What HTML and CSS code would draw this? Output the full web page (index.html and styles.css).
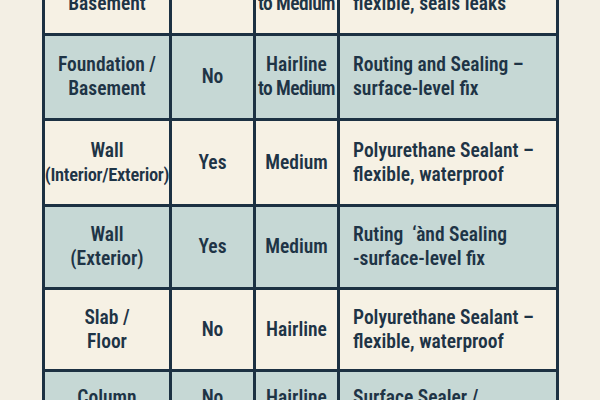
FILE: index.html
```html
<!DOCTYPE html>
<html>
<head>
<meta charset="utf-8">
<link rel="stylesheet" href="styles.css">
</head>
<body>
<div class="table">
  <div class="cell cream"><div>Foundation /<br>Basement</div></div>
  <div class="cell cream"><div>Yes</div></div>
  <div class="cell cream"><div>Hairline<br><span class="tight">to Medium</span></div></div>
  <div class="cell cream desc"><div>Polyurethane Injection –<br>flexible, seals leaks</div></div>

  <div class="cell blue"><div>Foundation /<br>Basement</div></div>
  <div class="cell blue"><div>No</div></div>
  <div class="cell blue"><div>Hairline<br><span class="tight">to Medium</span></div></div>
  <div class="cell blue desc"><div>Routing and Sealing –<br>surface-level fix</div></div>

  <div class="cell cream"><div>Wall<br><span class="small">(Interior/Exterior)</span></div></div>
  <div class="cell cream"><div>Yes</div></div>
  <div class="cell cream"><div>Medium</div></div>
  <div class="cell cream desc"><div>Polyurethane Sealant –<br>flexible, waterproof</div></div>

  <div class="cell blue"><div>Wall<br>(Exterior)</div></div>
  <div class="cell blue"><div>Yes</div></div>
  <div class="cell blue"><div>Medium</div></div>
  <div class="cell blue desc"><div>Ruting &nbsp;‘ànd Sealing<br>-surface-level fix</div></div>

  <div class="cell cream"><div>Slab /<br>Floor</div></div>
  <div class="cell cream"><div>No</div></div>
  <div class="cell cream"><div>Hairline</div></div>
  <div class="cell cream desc"><div>Polyurethane Sealant –<br>flexible, waterproof</div></div>

  <div class="cell blue last"><div>Column<br>/ Beam</div></div>
  <div class="cell blue last"><div>No</div></div>
  <div class="cell blue last"><div>Hairline</div></div>
  <div class="cell blue last desc"><div>Surface Sealer /<br>Epoxy Injection</div></div>
</div>
</body>
</html>
```
FILE: styles.css
```css
html, body {
  margin: 0;
  padding: 0;
  background: #f3efe4;
  overflow: hidden;
}

body {
  width: 600px;
  height: 400px;
  font-family: "Roboto Condensed", "Roboto", "Liberation Sans", sans-serif;
  font-weight: 600;
  font-size: 19.5px;
  line-height: 24px;
  color: #1e3446;
}

.table {
  display: grid;
  grid-template-columns: 124px 81px 81px 216px;
  grid-template-rows: 82px 82px 83px 80px 79px 82px;
  gap: 3px;
  padding: 3px;
  width: 511px;
  margin: -52px 0 0 42px;
  background: #1c3142;
}

.cell {
  display: flex;
  align-items: center;
  justify-content: center;
  text-align: center;
  white-space: nowrap;
  overflow: hidden;
}

.cream { background: #f6f1e4; }
.blue { background: #c6d8d5; }

.desc {
  justify-content: flex-start;
  text-align: left;
  padding-left: 13px;
}

.small {
  font-size: 18.5px;
  letter-spacing: -0.3px;
}

.tight {
  letter-spacing: -0.6px;
}

.last {
  align-items: flex-start;
  padding-top: 14px;
}
```
